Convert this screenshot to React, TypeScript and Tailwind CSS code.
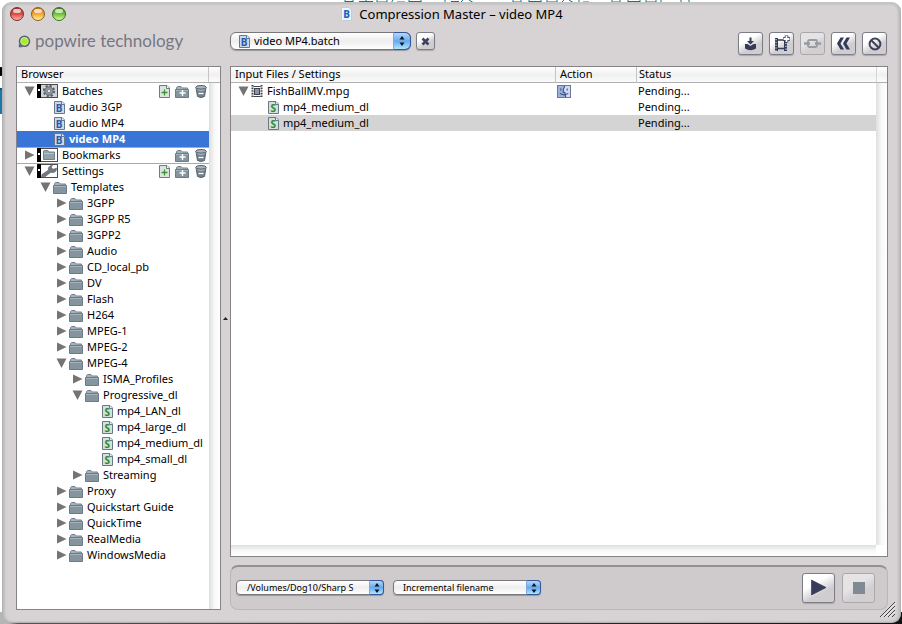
import React, { useState } from 'react';

type IconName = 'folder' | 'batch' | 'setting';

interface TreeNode {
  label: string;
  depth: number;
  icon: IconName;
  open?: boolean;
  leaf?: boolean;
}

interface Section {
  title: string;
  open: boolean;
  canAddFile: boolean;
  badge: 'gear' | 'folder' | 'wrench';
  nodes: TreeNode[];
}

const sections: Section[] = [
  {
    title: 'Batches',
    open: true,
    canAddFile: true,
    badge: 'gear',
    nodes: [
      { label: 'audio 3GP', depth: 0, icon: 'batch', leaf: true },
      { label: 'audio MP4', depth: 0, icon: 'batch', leaf: true },
      { label: 'video MP4', depth: 0, icon: 'batch', leaf: true },
    ],
  },
  { title: 'Bookmarks', open: false, canAddFile: false, badge: 'folder', nodes: [] },
  {
    title: 'Settings',
    open: true,
    canAddFile: true,
    badge: 'wrench',
    nodes: [
      { label: 'Templates', depth: 0, icon: 'folder', open: true },
      { label: '3GPP', depth: 1, icon: 'folder' },
      { label: '3GPP R5', depth: 1, icon: 'folder' },
      { label: '3GPP2', depth: 1, icon: 'folder' },
      { label: 'Audio', depth: 1, icon: 'folder' },
      { label: 'CD_local_pb', depth: 1, icon: 'folder' },
      { label: 'DV', depth: 1, icon: 'folder' },
      { label: 'Flash', depth: 1, icon: 'folder' },
      { label: 'H264', depth: 1, icon: 'folder' },
      { label: 'MPEG-1', depth: 1, icon: 'folder' },
      { label: 'MPEG-2', depth: 1, icon: 'folder' },
      { label: 'MPEG-4', depth: 1, icon: 'folder', open: true },
      { label: 'ISMA_Profiles', depth: 2, icon: 'folder' },
      { label: 'Progressive_dl', depth: 2, icon: 'folder', open: true },
      { label: 'mp4_LAN_dl', depth: 3, icon: 'setting', leaf: true },
      { label: 'mp4_large_dl', depth: 3, icon: 'setting', leaf: true },
      { label: 'mp4_medium_dl', depth: 3, icon: 'setting', leaf: true },
      { label: 'mp4_small_dl', depth: 3, icon: 'setting', leaf: true },
      { label: 'Streaming', depth: 2, icon: 'folder' },
      { label: 'Proxy', depth: 1, icon: 'folder' },
      { label: 'Quickstart Guide', depth: 1, icon: 'folder' },
      { label: 'QuickTime', depth: 1, icon: 'folder' },
      { label: 'RealMedia', depth: 1, icon: 'folder' },
      { label: 'WindowsMedia', depth: 1, icon: 'folder' },
    ],
  },
];

const indents = ['pl-[23px]', 'pl-[39px]', 'pl-[55px]', 'pl-[71px]'];

/* Icons */

const Triangle = ({ open }: { open?: boolean }) => (
  <svg width="11" height="12" viewBox="0 0 11 12" className="shrink-0">
    <path d={open ? 'M0.5 1.5H10.5L5.5 11Z' : 'M1 1.5V10.5L10.5 6Z'} fill="#747474" />
  </svg>
);

const Folder = ({ plus }: { plus?: boolean }) => (
  <svg width="15" height="13" viewBox="0 0 15 13" className="shrink-0">
    <path d="M1.5 11V2.5L2.5 1.5H6L7.5 3H12.5V11Z" fill="#a3b0b9" stroke="#75858f" />
    <path d="M0.5 4.5H13.5V12.5H0.5Z" fill="#8595a0" stroke="#6b7c88" />
    <path d="M1 5.5H13" stroke="#a5b3bc" />
    {plus && <path d="M7.5 5V11M4.5 8H10.5" stroke="#fff" strokeWidth="1.4" />}
  </svg>
);

const Sheet = ({ letter, color }: { letter: string; color: string }) => (
  <svg width="11" height="13" viewBox="0 0 11 13" className="shrink-0">
    <path d="M0.5 0.5H8L10.5 3V12.5H0.5Z" fill={letter === 'B' ? '#cdd9e8' : '#d6e0da'} stroke="#66798a" />
    <path d="M7.5 0.5V3.5H10.5" fill="#eef2f5" stroke="#66798a" />
    <text x="5.2" y="11.3" textAnchor="middle" fontSize="10" fontWeight="700" fill={color} fontFamily="Noto Sans, sans-serif">
      {letter}
    </text>
  </svg>
);

const AddFile = () => (
  <svg width="11" height="13" viewBox="0 0 11 13">
    <path d="M0.5 0.5H8L10.5 3V12.5H0.5Z" fill="#dde4df" stroke="#6c7c84" />
    <path d="M7.5 0.5V3.5H10.5" fill="#fff" stroke="#6c7c84" />
    <path d="M5.5 4.5V10.5M2.5 7.5H8.5" stroke="#3c9431" strokeWidth="1.3" />
  </svg>
);

const Trash = () => (
  <svg width="12" height="13" viewBox="0 0 12 13">
    <path d="M1 2.5L2.5 11.5Q6 13.5 9.5 11.5L11 2.5Z" fill="#74828d" stroke="#566370" />
    <ellipse cx="6" cy="2.3" rx="5.3" ry="1.8" fill="#a9b4bc" stroke="#566370" />
    <path d="M2.5 4.8Q6 6 9.5 4.8" stroke="#b8c3ca" fill="none" />
    <path d="M3.5 8.5H8.5" stroke="#fff" strokeWidth="1.3" />
  </svg>
);

const SectionBadge = ({ kind }: { kind: Section['badge'] }) => (
  <svg width="21" height="14" viewBox="0 0 21 14" className="shrink-0">
    <rect x="0.5" y="0.5" width="20" height="13" fill="#fff" stroke="#4b4b4b" />
    <rect width="4" height="14" fill="#000" />
    <path d="M1 6H3" stroke="#fff" strokeWidth="2" />
    {kind === 'gear' && (
      <>
        <rect x="4" y="1" width="16" height="12" fill="#d2d5d8" />
        <circle cx="12" cy="7" r="5" fill="none" stroke="#5a6169" strokeWidth="2.4" strokeDasharray="2.2 1.7" />
        <circle cx="12" cy="7" r="4.2" fill="#9398a0" stroke="#666d75" />
        <circle cx="12" cy="7" r="1.7" fill="#e6e8ea" stroke="#5a6169" strokeWidth="0.6" />
      </>
    )}
    {kind === 'folder' && (
      <>
        <path d="M6.5 11.5V3L7.5 2.5H11L12 4H17.5V11.5Z" fill="#93a1aa" stroke="#73838e" />
        <path d="M7 5.5H17" stroke="#b8c3ca" />
      </>
    )}
    {kind === 'wrench' && (
      <path
        d="M4.5 12.8L5 10.5L11.3 6.2Q10.8 3.3 13 1.9L15.5 1.2L14.3 3.5L16 5.3L19.6 4.2Q19.7 8 15.8 8.6L13.5 8.4L8 12.8Z"
        fill="#717881"
        stroke="#565d65"
        strokeWidth="0.6"
      />
    )}
  </svg>
);

const FilmStrip = () => (
  <svg width="12" height="13" viewBox="0 0 12 13" className="shrink-0">
    <path d="M1.5 0V13M10.5 0V13" stroke="#3e434c" strokeWidth="2" strokeDasharray="1.6 1" />
    <path d="M2.5 1.5H9.5M2.5 11.5H9.5" stroke="#3e434c" />
    <rect x="3.5" y="3.5" width="5" height="6" fill="#8e93a8" stroke="#3e434c" />
  </svg>
);

const Finder = () => (
  <svg width="14" height="13" viewBox="0 0 14 13" role="img" aria-label="Finder">
    <rect x="0.5" y="0.5" width="13" height="12" fill="#9db1de" stroke="#6c7795" />
    <path d="M7.5 1H13V12H8.5Q8 9.5 8 7.5H6Q6 4 7.5 1Z" fill="#d1dcf2" />
    <path d="M7.8 1Q6 4 6 7.3H8Q8 10 8.7 12" fill="none" stroke="#2e4475" />
    <path d="M3.8 3.5V5.5M10.2 3.5V5.5M2.8 8.5Q7 11.5 11.3 8.5" fill="none" stroke="#2e4475" />
  </svg>
);

/* Controls */

interface PopupProps {
  label: string;
  value: string;
  className: string;
  selectClass: string;
  arrowClass: string;
  children?: React.ReactNode;
}

const Popup: React.FC<PopupProps> = ({ label, value, className, selectClass, arrowClass, children }) => (
  <label className={`relative flex ${className}`}>
    <select
      aria-label={label}
      defaultValue={value}
      className={`h-full w-full appearance-none border border-[#77777c] bg-linear-to-b from-white via-[#eeeeee] to-white text-black shadow-[0_1px_1px_#99979a] outline-none ${selectClass}`}
    >
      <option>{value}</option>
    </select>
    {children}
    <span
      className={`pointer-events-none absolute inset-y-0 right-0 flex items-center justify-center border border-[#31599b] border-l-[#7fa8df] bg-linear-to-b from-[#b9d7f8] via-[#65a9f0] to-[#b0e5ff] ${arrowClass}`}
    >
      <svg width="6" height="10" viewBox="0 0 6 10">
        <path d="M3 0L5.5 3.5H0.5ZM3 10L5.5 6.5H0.5Z" fill="#0b1520" />
      </svg>
    </span>
  </label>
);

interface BevelButtonProps {
  label: string;
  className: string;
  disabled?: boolean;
  children: React.ReactNode;
}

const BevelButton: React.FC<BevelButtonProps> = ({ label, className, disabled, children }) => (
  <button
    aria-label={label}
    disabled={disabled}
    className={`flex items-center justify-center rounded-[3px] border ${
      disabled
        ? 'border-[#aaa8ab] bg-linear-150 from-[#e6e3e5] from-40% to-[#d2cfd1] to-65%'
        : 'border-[#7d7d86] bg-linear-150 from-white from-35% to-[#d0cdd0] to-65% shadow-[0_1px_1px_#aaa7aa]'
    } ${className}`}
  >
    {children}
  </button>
);

const TrafficLight = ({ label, className }: { label: string; className: string }) => (
  <button aria-label={label} className={`flex size-[14px] justify-center rounded-full border pt-px ${className}`}>
    <span className="h-1 w-2 rounded-full bg-white/70" />
  </button>
);

const TitleBar = () => (
  <header className="grid h-[20px] grid-cols-[1fr_auto_1fr] items-center px-2">
    <div className="flex gap-[7px]">
      <TrafficLight label="Close" className="border-[#762b2b] bg-linear-to-b from-[#a63430] via-[#dc4a43] to-[#ffada5]" />
      <TrafficLight label="Minimize" className="border-[#8a5a1e] bg-linear-to-b from-[#bf701a] via-[#f5a42d] to-[#fff393]" />
      <TrafficLight label="Zoom" className="border-[#3a6a20] bg-linear-to-b from-[#428422] via-[#71bf3d] to-[#d0ff95]" />
    </div>
    <h1 className="flex items-center gap-[7px] pb-px text-[13px] leading-4 text-black">
      <svg width="11" height="14" viewBox="0 0 11 14">
        <path d="M0.5 0.5H8L10.5 3V13.5H0.5Z" fill="#eef5fd" stroke="#c3ccd7" />
        <text x="5.5" y="11" textAnchor="middle" fontSize="10" fontWeight="800" fill="#1267c3" fontFamily="Noto Sans, sans-serif">
          B
        </text>
      </svg>
      Compression Master – video MP4
    </h1>
  </header>
);

const Toolbar = () => (
  <div className="flex h-[42px] items-start pt-2">
    <div className="flex w-[214px] items-center gap-1 pl-[2px]">
      <svg width="13" height="14" viewBox="0 0 13 14">
        <path d="M0.8 13.2V9.5L4.5 13.2Z" fill="#596273" />
        <circle cx="6.5" cy="7.3" r="5" fill="#a9ec2b" stroke="#596273" strokeWidth="1.6" />
        <circle cx="6.5" cy="7.3" r="3.7" fill="none" stroke="#d3e3b5" strokeWidth="0.8" />
      </svg>
      <span className="font-['Lato',sans-serif] text-[17px] leading-[18px] text-[#747782]">popwire technology</span>
    </div>
    <Popup
      label="Batch"
      value="video MP4.batch"
      className="h-[18px] w-[181px]"
      selectClass="rounded-md pl-[23px] text-[11px] leading-4"
      arrowClass="w-[18px] rounded-r-md"
    >
      <span className="pointer-events-none absolute left-[9px] top-[3px]">
        <Sheet letter="B" color="#2459ad" />
      </span>
    </Popup>
    <BevelButton label="Close batch" className="ml-[5px] h-[18px] w-[19px]">
      <svg width="9" height="9" viewBox="0 0 9 9">
        <path d="M1.5 1.5L7.5 7.5M7.5 1.5L1.5 7.5" stroke="#3d435d" strokeWidth="2.6" />
      </svg>
    </BevelButton>
    <div className="ml-auto flex gap-[6px] pr-px">
      <BevelButton label="Import" className="h-[23px] w-[25px]">
        <svg width="13" height="14" viewBox="0 0 13 14" fill="#343b58">
          <path d="M5.5 0.5H7.5V4H10L6.5 7.5L3 4H5.5Z" />
          <path d="M1 7H3.5L6.5 9L9.5 7H12V11.5Q6.5 15 1 11.5Z" />
        </svg>
      </BevelButton>
      <BevelButton label="Add clip" className="h-[23px] w-[25px]">
        <svg width="16" height="17" viewBox="0 0 16 17">
          <path d="M2.5 3V16M11.5 3V16" stroke="#343b58" strokeWidth="3" />
          <path d="M2 4V16M12 8V16" stroke="#fff" strokeDasharray="1.2 1.6" />
          <path d="M3 5H10M3 13.5H10" stroke="#343b58" strokeWidth="1.5" />
          <path d="M12.5 0.5V7.5M9 4H16" stroke="#343b58" strokeWidth="3.6" />
          <path d="M12.5 1V7M9.5 4H15.5" stroke="#fff" strokeWidth="1.8" />
        </svg>
      </BevelButton>
      <BevelButton label="Link" disabled className="h-[23px] w-[25px]">
        <svg width="17" height="9" viewBox="0 0 17 9" fill="none" stroke="#969ba3">
          <rect x="4" y="1" width="9" height="7" rx="1.5" strokeWidth="1.8" />
          <path d="M0 4.5H6M11 4.5H17" strokeWidth="2.4" />
        </svg>
      </BevelButton>
      <BevelButton label="Rewind" className="h-[23px] w-[25px]">
        <svg width="15" height="13" viewBox="0 0 15 13" fill="#343b58">
          <path d="M4.5 0.5H8L4.5 6.5L8 12.5H4.5L1 6.5ZM10.5 0.5H14L10.5 6.5L14 12.5H10.5L7 6.5Z" />
        </svg>
      </BevelButton>
      <BevelButton label="Stop all" className="h-[23px] w-[25px]">
        <svg width="14" height="14" viewBox="0 0 14 14" fill="none" stroke="#3d4358" strokeWidth="2">
          <circle cx="7" cy="7" r="5.4" />
          <path d="M3.2 3.2L10.8 10.8" />
        </svg>
      </BevelButton>
    </div>
  </div>
);

const headerFill = 'bg-linear-to-b from-white via-[#f0f0f0] to-[#fcfcfc]';
const trackFill = 'bg-linear-to-r from-[#dedede] via-[#f8f8f8] to-white';

const Browser = () => {
  const [selected, setSelected] = useState('video MP4');

  return (
    <aside className="flex w-[205px] shrink-0 flex-col border border-[#858387] bg-white">
      <div className={`flex h-4 border-b border-[#b0b0b0] ${headerFill}`}>
        <h2 className="flex-1 pl-1 leading-[14px]">Browser</h2>
        <span className="w-3 border-l border-[#c5c5c5]" />
      </div>
      <div className="flex flex-1">
        <div className="min-w-0 flex-1">
          {sections.map((section, i) => (
            <section key={section.title}>
              <div className={`flex h-4 items-center pl-[7px] pr-[2px] ${i > 0 ? 'shadow-[inset_0_1px_0_#aaaaaa]' : ''}`}>
                <button className="flex items-center gap-[2px]" aria-expanded={section.open}>
                  <Triangle open={section.open} />
                  <SectionBadge kind={section.badge} />
                  <span className="pl-[2px]">{section.title}</span>
                </button>
                <div className="ml-auto flex items-center gap-[5px]">
                  {section.canAddFile && <button aria-label="New file"><AddFile /></button>}
                  <button aria-label="New folder"><Folder plus /></button>
                  <button aria-label="Delete"><Trash /></button>
                </div>
              </div>
              {section.nodes.map((node) => {
                const active = node.label === selected;
                return (
                  <button
                    key={node.label}
                    onClick={() => setSelected(node.label)}
                    className={`flex h-4 w-full items-center whitespace-nowrap ${indents[node.depth]} ${
                      active ? 'bg-[#3875d7] font-bold text-white' : ''
                    }`}
                  >
                    {node.leaf ? <span className="w-[14px] shrink-0" /> : <Triangle open={node.open} />}
                    <span className={`flex items-center ${node.leaf ? 'gap-1' : 'gap-[3px] pl-[2px]'}`}>
                      {node.icon === 'folder' && <Folder />}
                      {node.icon === 'batch' && <Sheet letter="B" color="#2459ad" />}
                      {node.icon === 'setting' && <Sheet letter="S" color="#288a32" />}
                      {node.label}
                    </span>
                  </button>
                );
              })}
            </section>
          ))}
        </div>
        <div className={`w-[11px] shrink-0 ${trackFill}`} />
      </div>
    </aside>
  );
};

const InputFiles = () => (
  <div className="flex flex-1 flex-col border border-[#858387] bg-white">
    <div className="flex flex-1">
      <div className="min-w-0 flex-1">
        <table className="w-full table-fixed border-separate border-spacing-0 text-left">
          <colgroup>
            <col />
            <col className="w-[81px]" />
            <col className="w-[240px]" />
          </colgroup>
          <thead>
            <tr className={`h-4 ${headerFill}`}>
              <th className="border-b border-[#b0b0b0] py-0 pb-px pl-1 font-normal leading-[14px]">Input Files / Settings</th>
              <th className="border-b border-l border-[#b0b0b0] border-l-[#c5c5c5] py-0 pb-px pl-1 font-normal leading-[14px]">Action</th>
              <th className="border-b border-l border-[#b0b0b0] border-l-[#c5c5c5] py-0 pb-px pl-[2px] font-normal leading-[14px]">Status</th>
            </tr>
          </thead>
          <tbody>
            <tr className="h-4">
              <td className="p-0">
                <span className="flex items-center gap-[2px] pl-[7px]">
                  <Triangle open />
                  <FilmStrip />
                  <span className="pl-[2px]">FishBallMV.mpg</span>
                </span>
              </td>
              <td className="py-0 pl-[2px]"><Finder /></td>
              <td className="py-0 pl-[2px]">Pending...</td>
            </tr>
            {['first', 'second'].map((id) => (
              <tr key={id} className={`h-4 ${id === 'second' ? 'bg-[#d4d4d4]' : ''}`}>
                <td className="p-0">
                  <span className="flex items-center gap-1 pl-[37px]">
                    <Sheet letter="S" color="#288a32" />
                    mp4_medium_dl
                  </span>
                </td>
                <td className="p-0" />
                <td className="py-0 pl-[2px]">Pending...</td>
              </tr>
            ))}
          </tbody>
        </table>
      </div>
      <div className="flex w-[11px] shrink-0 flex-col">
        <div className={`h-4 border-b border-l border-[#b0b0b0] border-l-[#d5d5d5] ${headerFill}`} />
        <div className={`flex-1 ${trackFill}`} />
      </div>
    </div>
    <div className="mr-[11px] h-[11px] bg-linear-to-b from-[#dedede] via-[#f8f8f8] to-white" />
  </div>
);

const OutputBar = () => (
  <footer className="flex h-[45px] items-center gap-[9px] rounded-lg border border-[#bab7b9] border-t-2 border-t-[#929092] bg-[#cfcbcd] pb-px pl-[5px] pr-3">
    <Popup
      label="Destination"
      value="/Volumes/Dog10/Sharp S"
      className="h-[15px] w-[148px]"
      selectClass="rounded-[4px] pl-[10px] text-[9px] leading-3"
      arrowClass="w-[15px] rounded-r-[4px]"
    />
    <Popup
      label="File naming"
      value="Incremental filename"
      className="h-[15px] w-[148px]"
      selectClass="rounded-[4px] pl-[9px] text-[9px] leading-3"
      arrowClass="w-[15px] rounded-r-[4px]"
    />
    <div className="ml-auto flex gap-[7px]">
      <BevelButton label="Start" className="h-[30px] w-[33px]">
        <svg width="17" height="17" viewBox="0 0 17 17">
          <path d="M1.5 1L16 8.5L1.5 16Z" fill="#363c59" stroke="#262c45" strokeWidth="0.6" />
        </svg>
      </BevelButton>
      <BevelButton label="Stop" disabled className="h-[30px] w-[33px]">
        <span className="size-3 bg-[#7f8a92]" />
      </BevelButton>
    </div>
  </footer>
);

export default function App() {
  return (
    <div className="relative flex min-h-screen flex-col bg-white font-['Noto_Sans',sans-serif] text-[11px] leading-4 text-black">
      {/* Desktop showing behind the window */}
      <div aria-hidden="true" className="absolute inset-x-0 top-0 flex justify-center pl-[132px]">
        <svg width="348" height="3" viewBox="0 0 348 3" fill="none" stroke="#16738c">
          <path d="M2 0V3M10 0V3M2 1.5H10M16 1.5H30M23 0V3M34 0V3M44 0V3M34 2H44M50 0L48 3M54 2H62M66 0V3M78 0V3M66 1.5H78" />
          <path d="M102 0V3M108 1.5H116M120 0L117 3M126 0L131 3M135 2.5H148" />
          <path d="M170 0V3M178 0V3M170 2H178M186 0V3M198 0V3M186 1.5H198M204 0V3M214 0V3M204 2H214M221 0L218 3M226 0L231 3M236 0V3M240 2H246" />
          <path d="M269 0V3M277 0V3M269 2H277M285 0V3M297 0V3M285 1.5H297M303 0V3M313 0V3M303 2H313M318 0V3M322 2.5H334M338 0V3M346 0V3" />
        </svg>
      </div>
      <div aria-hidden="true" className="absolute left-0 top-[88px] h-[26px] w-2 border-t-2 border-[#184e70] bg-[#1a79aa]" />
      <div aria-hidden="true" className="absolute left-0 top-[67px] h-[9px] w-[5px] rounded-r-full bg-black" />
      <div aria-hidden="true" className="absolute bottom-0 right-0 h-3 w-full bg-linear-to-r from-[#b5b5b5] from-1% via-[#565456] via-2% to-[#111111]" />

      <div className="relative ml-[2px] mr-px mt-[2px] mb-px flex flex-1 flex-col rounded-[9px] border border-[#b3b1b3] border-t-2 border-t-[#c3c5c2] bg-[#d7d3d5] pb-3 pl-[13px] pr-3 shadow-[inset_2px_0_2px_#bfbdbf,inset_-2px_0_2px_#bfbdbf]">
        <div className="-mx-[14px]">
          <TitleBar />
        </div>
        <Toolbar />
        <main className="flex flex-1">
          <Browser />
          <div className="flex w-[9px] shrink-0 items-center justify-center pb-[40px]">
            <svg width="5" height="3" viewBox="0 0 5 3">
              <path d="M2.5 0L5 3H0Z" fill="#222" />
            </svg>
          </div>
          <div className="flex min-w-0 flex-1 flex-col gap-2">
            <InputFiles />
            <OutputBar />
          </div>
        </main>
        <svg width="16" height="16" viewBox="0 0 16 16" className="absolute bottom-1 right-1">
          <path d="M0 15L15 0M4 15L15 4M8 15L15 8M12 15L15 12" stroke="#444" />
          <path d="M1.5 15L15 1.5M5.5 15L15 5.5M9.5 15L15 9.5" stroke="#f3f3f3" />
        </svg>
      </div>
    </div>
  );
}
